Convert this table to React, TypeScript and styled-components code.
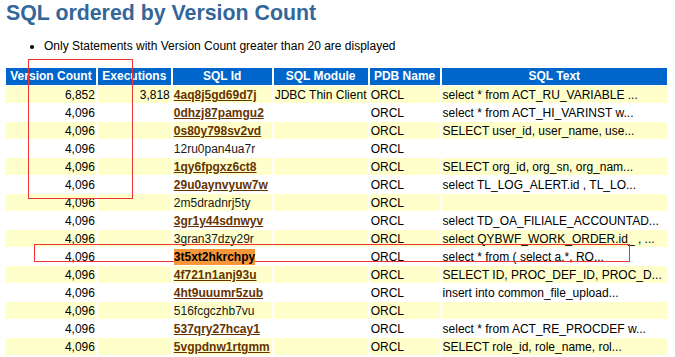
import styled, { createGlobalStyle } from "styled-components";

interface SqlRow {
	versions: string;
	execs: string;
	sqlId: string;
	link: boolean;
	module: string;
	pdb: string;
	text: string;
}

const rows: SqlRow[] = [
	{ versions: "6,852", execs: "3,818", sqlId: "4aq8j5gd69d7j", link: true, module: "JDBC Thin Client", pdb: "ORCL", text: "select * from ACT_RU_VARIABLE ..." },
	{ versions: "4,096", execs: "", sqlId: "0dhzj87pamgu2", link: true, module: "", pdb: "ORCL", text: "select * from ACT_HI_VARINST w..." },
	{ versions: "4,096", execs: "", sqlId: "0s80y798sv2vd", link: true, module: "", pdb: "ORCL", text: "SELECT user_id, user_name, use..." },
	{ versions: "4,096", execs: "", sqlId: "12ru0pan4ua7r", link: false, module: "", pdb: "ORCL", text: "" },
	{ versions: "4,096", execs: "", sqlId: "1qy6fpgxz6ct8", link: true, module: "", pdb: "ORCL", text: "SELECT org_id, org_sn, org_nam..." },
	{ versions: "4,096", execs: "", sqlId: "29u0aynvyuw7w", link: true, module: "", pdb: "ORCL", text: "select TL_LOG_ALERT.id , TL_LO..." },
	{ versions: "4,096", execs: "", sqlId: "2m5dradnrj5ty", link: false, module: "", pdb: "ORCL", text: "" },
	{ versions: "4,096", execs: "", sqlId: "3gr1y44sdnwyv", link: true, module: "", pdb: "ORCL", text: "select TD_OA_FILIALE_ACCOUNTAD..." },
	{ versions: "4,096", execs: "", sqlId: "3gran37dzy29r", link: false, module: "", pdb: "ORCL", text: "select QYBWF_WORK_ORDER.id_ , ..." },
	{ versions: "4,096", execs: "", sqlId: "3t5xt2hkrchpy", link: true, module: "", pdb: "ORCL", text: "select * from ( select a.*, RO..." },
	{ versions: "4,096", execs: "", sqlId: "4f721n1anj93u", link: true, module: "", pdb: "ORCL", text: "SELECT ID, PROC_DEF_ID, PROC_D..." },
	{ versions: "4,096", execs: "", sqlId: "4ht9uuumr5zub", link: true, module: "", pdb: "ORCL", text: "insert into common_file_upload..." },
	{ versions: "4,096", execs: "", sqlId: "516fcgczhb7vu", link: false, module: "", pdb: "ORCL", text: "" },
	{ versions: "4,096", execs: "", sqlId: "537qry27hcay1", link: true, module: "", pdb: "ORCL", text: "select * from ACT_RE_PROCDEF w..." },
	{ versions: "4,096", execs: "", sqlId: "5vgpdnw1rtgmm", link: true, module: "", pdb: "ORCL", text: "SELECT role_id, role_name, rol..." },
];

// the id the reader searched for (browser find highlight)
const FOUND = "3t5xt2hkrchpy";

const App = () => {
	return (
		<Page>
			<GlobalStyle />
			<Title>SQL ordered by Version Count</Title>
			<Notes>
				<li>Only Statements with Version Count greater than 20 are displayed</li>
			</Notes>
			<Report>
				<thead>
					<tr>
						<HeadCell $w={90}>Version Count</HeadCell>
						<HeadCell $w={73}>Executions</HeadCell>
						<HeadCell $w={99}>SQL Id</HeadCell>
						<HeadCell $w={94}>SQL Module</HeadCell>
						<HeadCell $w={70}>PDB Name</HeadCell>
						<HeadCell $w={226}>SQL Text</HeadCell>
					</tr>
				</thead>
				<tbody>
					{rows.map((r, i) => (
						<Row key={r.sqlId} $shaded={i % 2 === 0}>
							<Cell $right>{r.versions}</Cell>
							<Cell $right>{r.execs}</Cell>
							<Cell>
								{r.sqlId === FOUND ? (
									<FindMatch>{r.sqlId}</FindMatch>
								) : r.link ? (
									<SqlLink href="#">{r.sqlId}</SqlLink>
								) : (
									<PlainId>{r.sqlId}</PlainId>
								)}
							</Cell>
							<Cell>{r.module}</Cell>
							<Cell>{r.pdb}</Cell>
							<Cell>{r.text}</Cell>
						</Row>
					))}
				</tbody>
			</Report>
			{/* review annotations drawn over the report */}
			<Annotation $x={28} $y={59} $w={105} $h={140} />
			<Annotation $x={34} $y={244} $w={596} $h={18} />
		</Page>
	);
};

export default App;

//STYLES
const GlobalStyle = createGlobalStyle`
	html, body {
		margin: 0;
		padding: 0;
		background: #ffffff;
	}
	body {
		font-family: "Liberation Sans", Arial, Helvetica, sans-serif;
	}
`;

const Page = styled.div`
	position: relative;
	width: 675px;
	height: 357px;
	overflow: hidden;
	padding: 1px 6px 0;
	box-sizing: border-box;
`;

const Title = styled.h2`
	margin: 0;
	font: bold 21.33px/24px "Liberation Sans", Arial, sans-serif;
	color: #336699;
	height: 24px;
`;

const Notes = styled.ul`
	margin: 14px 0 0 0;
	padding-left: 38px;
	list-style: disc;

	li {
		font-size: 12px;
		line-height: 14px;
		color: #000000;
	}
`;

const Report = styled.table`
	margin: 14px 0 0 -2px;
	border-collapse: separate;
	border-spacing: 2px 1px;
	table-layout: fixed;
	font-size: 12px;
`;

const HeadCell = styled.th<{ $w: number }>`
	box-sizing: border-box;
	width: ${(p) => p.$w}px;
	height: 17px;
	padding: 0 4px 1px;
	background: #0066cc;
	color: #ffffff;
	font-weight: bold;
	font-size: 12px;
	line-height: 16px;
	text-align: center;
	white-space: nowrap;
`;

const Row = styled.tr<{ $shaded: boolean }>`
	background: ${(p) => (p.$shaded ? "#ffffcc" : "#ffffff")};
`;

const Cell = styled.td<{ $right?: boolean }>`
	box-sizing: border-box;
	height: 17px;
	padding: 2px 1px 0;
	font-size: 12px;
	line-height: 15px;
	color: #000000;
	text-align: ${(p) => (p.$right ? "right" : "left")};
	vertical-align: top;
	white-space: nowrap;
	overflow: hidden;
`;

const SqlLink = styled.a`
	font-weight: bold;
	color: #663300;
	text-decoration: underline;
`;

const PlainId = styled.span`
	color: #1a1a1a;
`;

const FindMatch = styled.span`
	position: relative;
	z-index: 2;
	font-weight: bold;
	color: #000000;
	background: #f8963a;
	padding: 1px 0;
`;

const Annotation = styled.div<{ $x: number; $y: number; $w: number; $h: number }>`
	position: absolute;
	left: ${(p) => p.$x}px;
	top: ${(p) => p.$y}px;
	width: ${(p) => p.$w}px;
	height: ${(p) => p.$h}px;
	box-sizing: border-box;
	border: 1px solid #ee3333;
	z-index: 1;
	pointer-events: none;
`;
